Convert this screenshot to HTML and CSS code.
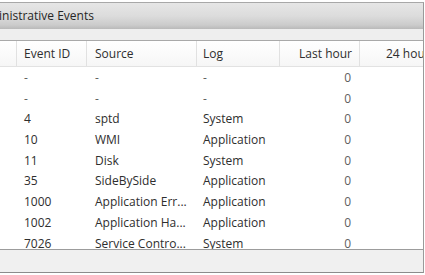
FILE: index.html
```html
<!DOCTYPE html>
<html>
<head>
<meta charset="utf-8">
<link rel="stylesheet" href="styles.css">
</head>
<body>
<div class="window">
  <div class="titlebar"><span class="title">Administrative Events</span></div>
  <div class="band"></div>
  <div class="grid header">
    <div class="cell"></div>
    <div class="cell c1">Event ID</div>
    <div class="cell c2">Source</div>
    <div class="cell c3">Log</div>
    <div class="cell c4">Last hour</div>
    <div class="cell c5">24 hours</div>
  </div>
  <div class="rows">
    <div class="grid row"><div></div><div class="c1 dim">-</div><div class="c2 dim">-</div><div class="c3 dim">-</div><div class="c4 dim">0</div><div class="c5"></div></div>
    <div class="grid row"><div></div><div class="c1 dim">-</div><div class="c2 dim">-</div><div class="c3 dim">-</div><div class="c4 dim">0</div><div class="c5"></div></div>
    <div class="grid row"><div></div><div class="c1">4</div><div class="c2">sptd</div><div class="c3">System</div><div class="c4 dim">0</div><div class="c5"></div></div>
    <div class="grid row"><div></div><div class="c1">10</div><div class="c2">WMI</div><div class="c3">Application</div><div class="c4 dim">0</div><div class="c5"></div></div>
    <div class="grid row"><div></div><div class="c1">11</div><div class="c2">Disk</div><div class="c3">System</div><div class="c4 dim">0</div><div class="c5"></div></div>
    <div class="grid row"><div></div><div class="c1">35</div><div class="c2">SideBySide</div><div class="c3">Application</div><div class="c4 dim">0</div><div class="c5"></div></div>
    <div class="grid row"><div></div><div class="c1">1000</div><div class="c2">Application Err...</div><div class="c3">Application</div><div class="c4 dim">0</div><div class="c5"></div></div>
    <div class="grid row"><div></div><div class="c1">1002</div><div class="c2">Application Ha...</div><div class="c3">Application</div><div class="c4 dim">0</div><div class="c5"></div></div>
    <div class="grid row"><div></div><div class="c1">7026</div><div class="c2">Service Contro...</div><div class="c3">System</div><div class="c4 dim">0</div><div class="c5"></div></div>
  </div>
  <div class="footer"></div>
</div>
</body>
</html>
```

FILE: styles.css
```css
html, body {
  margin: 0;
  padding: 0;
  background: #ffffff;
}
body {
  width: 425px;
  height: 275px;
  overflow: hidden;
  font-family: "Open Sans", "DejaVu Sans", sans-serif;
  font-size: 12px;
  color: #2e2e2e;
}
.window {
  margin-top: 2px;
  width: 424px;
  border-top: 1px solid #a8a8a8;
  border-right: 1px solid #9a9a9a;
  border-bottom: 1px solid #8c8c8c;
  box-sizing: border-box;
}
.titlebar {
  height: 26px;
  background: linear-gradient(#e6e6e6 0%, #dcdcdc 50%, #cbcbcb 85%, #b9b9b9 100%);
  overflow: hidden;
  white-space: nowrap;
  display: flex;
  align-items: center;
}
.title {
  margin-left: -27px;
  font-size: 12px;
  color: #262626;
  padding-bottom: 2px;
}
.band {
  height: 11px;
  background: #eeeeee;
  border-bottom: 1px solid #a9a9a9;
}
.grid {
  display: grid;
  grid-template-columns: 16px 70px 110px 83px 80px 1fr;
  white-space: nowrap;
}
.header {
  height: 25px;
  background: linear-gradient(#ffffff, #f6f6f6);
  border-bottom: 1px solid #e2e2e2;
  align-items: stretch;
}
.header .cell {
  display: flex;
  align-items: center;
  box-sizing: border-box;
  overflow: hidden;
}
.header .cell + .cell {
  border-left: 1px solid #e1e1e1;
}
.header .c4 {
  justify-content: flex-end;
}
.c1 { padding-left: 7px; }
.c2 { padding-left: 8px; }
.c3 { padding-left: 6px; }
.c4 { padding-right: 7px; text-align: right; }
.header .c5 { padding-left: 26px; }
.rows {
  height: 183px;
  overflow: hidden;
  border-bottom: 1px solid #9c9c9c;
  padding-top: 1px;
  box-sizing: border-box;
}
.row {
  height: 20.7px;
  line-height: 20.7px;
}
.row > div {
  overflow: hidden;
}
.row .c1 { padding-left: 8px; }
.row .c2 { padding-left: 9px; }
.row .c3 { padding-left: 7px; }
.row .c4 { padding-right: 8px; }
.dim {
  color: #5e5e5e;
}
.footer {
  height: 22px;
  background: #f0f0f0;
}
```
